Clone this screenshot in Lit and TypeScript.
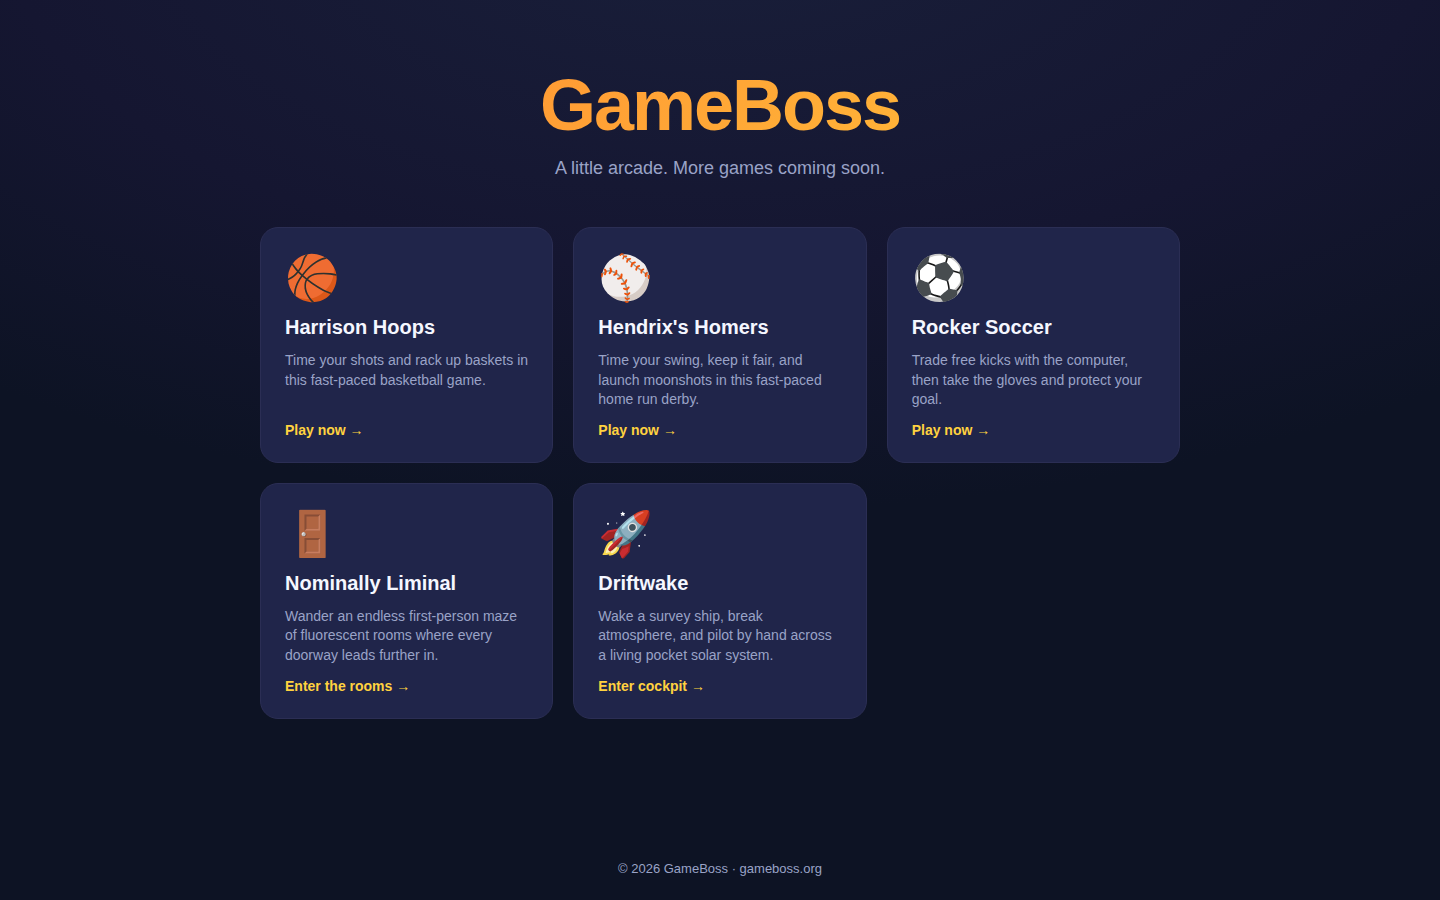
import { LitElement, html, css } from "lit";
import { customElement, property } from "lit/decorators.js";

interface Game {
  icon: string;
  name: string;
  blurb: string;
  action: string;
  href: string;
}

const GAMES: Game[] = [
  { icon: "🏀", name: "Harrison Hoops", blurb: "Time your shots and rack up baskets in this fast-paced basketball game.", action: "Play now →", href: "#harrison-hoops" },
  { icon: "⚾", name: "Hendrix's Homers", blurb: "Time your swing, keep it fair, and launch moonshots in this fast-paced home run derby.", action: "Play now →", href: "#hendrixs-homers" },
  { icon: "⚽", name: "Rocker Soccer", blurb: "Trade free kicks with the computer, then take the gloves and protect your goal.", action: "Play now →", href: "#rocker-soccer" },
  { icon: "🚪", name: "Nominally Liminal", blurb: "Wander an endless first-person maze of fluorescent rooms where every doorway leads further in.", action: "Enter the rooms →", href: "#nominally-liminal" },
  { icon: "🚀", name: "Driftwake", blurb: "Wake a survey ship, break atmosphere, and pilot by hand across a living pocket solar system.", action: "Enter cockpit →", href: "#driftwake" },
];

@customElement("game-card")
class GameCard extends LitElement {
  @property({ attribute: false }) game!: Game;

  static styles = css`
    :host {
      display: grid;
    }
    .card {
      display: flex;
      flex-direction: column;
      padding: 24px;
      border: 1px solid #2b2e54;
      border-radius: 18px;
      background: #20254a;
      color: #f5f7ff;
      text-decoration: none;
    }
    .icon {
      font-size: 44px;
      line-height: 52px;
    }
    .name {
      margin: 11px 0 12px;
      font-size: 20px;
      line-height: 24px;
      font-weight: 700;
    }
    .blurb {
      flex: 1;
      margin: 0;
      color: #9aa3c7;
      font-size: 14px;
      line-height: 1.4;
    }
    .action {
      margin-top: 12px;
      color: #ffd23f;
      font-size: 14px;
      line-height: 16px;
      font-weight: 700;
    }
  `;

  render() {
    const { icon, name, blurb, action, href } = this.game;
    return html`
      <a class="card" href=${href}>
        <span class="icon" aria-hidden="true">${icon}</span>
        <h2 class="name">${name}</h2>
        <p class="blurb">${blurb}</p>
        <span class="action">${action}</span>
      </a>
    `;
  }
}

@customElement("app-root")
class AppRoot extends LitElement {
  static styles = css`
    :host {
      display: flex;
      flex-direction: column;
      box-sizing: border-box;
      min-height: 100vh;
      padding: 0 20px;
      background: radial-gradient(1200px 600px at 50% -10%, #191f3a, #151631 60%, #0d1324) #0d1324;
      color: #f5f7ff;
      font-family: "Liberation Sans", Arial, sans-serif;
    }
    .header {
      padding: 64px 0 48px;
      text-align: center;
    }
    .header,
    .games {
      width: 100%;
      max-width: 920px;
      margin: 0 auto;
    }
    .title {
      margin: 0 0 11px;
      background: linear-gradient(135deg, #ff8c32, #ffc23a);
      -webkit-background-clip: text;
      background-clip: text;
      color: transparent;
      font-size: 72px;
      line-height: 82px;
      font-weight: 700;
      letter-spacing: -2px;
    }
    .tagline {
      margin: 0;
      color: #9aa3c7;
      font-size: 18px;
      line-height: 22px;
    }
    .games {
      display: grid;
      grid-template-columns: repeat(auto-fit, minmax(260px, 1fr));
      gap: 20px;
    }
    .footer {
      margin-top: auto;
      padding: 24px 0;
      color: #9aa3c7;
      font-size: 13px;
      line-height: 15px;
      text-align: center;
    }
  `;

  render() {
    return html`
      <header class="header">
        <h1 class="title">GameBoss</h1>
        <p class="tagline">A little arcade. More games coming soon.</p>
      </header>
      <main class="games">
        ${GAMES.map((game) => html`<game-card .game=${game}></game-card>`)}
      </main>
      <footer class="footer">© 2026 GameBoss · gameboss.org</footer>
    `;
  }
}
